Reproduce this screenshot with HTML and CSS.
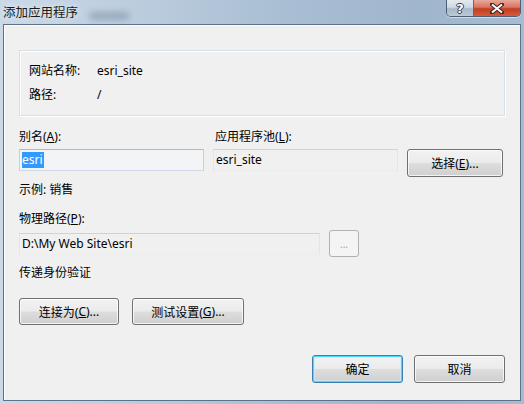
FILE: index.html
```html
<!DOCTYPE html>
<html lang="zh-CN">
<head>
<meta charset="utf-8">
<title>添加应用程序</title>
<link rel="stylesheet" href="styles.css">
</head>
<body>
<div class="window">
  <div class="titlebar">
    <span class="title">添加应用程序</span>
    <span class="ghost"></span>
    <div class="caption">
      <span class="cap-btn help">?</span>
      <span class="cap-btn close">
        <svg width="14" height="11" viewBox="0 0 14 11"><path d="M2 1.5 L12 9.5 M12 1.5 L2 9.5" stroke="#3a2a28" stroke-width="4" stroke-linecap="square" fill="none"/><path d="M2 1.5 L12 9.5 M12 1.5 L2 9.5" stroke="#fff" stroke-width="2" fill="none"/></svg>
      </span>
    </div>
  </div>
  <div class="client">
    <div class="groupbox">
      <span class="k">网站名称:</span><span class="v">esri_site</span>
      <span class="k">路径:</span><span class="v">/</span>
    </div>

    <div class="pool-grid">
      <label class="lbl">别名(<u>A</u>):</label>
      <label class="lbl">应用程序池(<u>L</u>):</label>
      <span></span>
      <div class="input edit"><span class="sel">esri</span></div>
      <div class="input readonly">esri_site</div>
      <button class="btn select">选择(<u>E</u>)...</button>
    </div>

    <div class="line example">示例: 销售</div>
    <div class="line lbl-path">物理路径(<u>P</u>):</div>

    <div class="path-row">
      <div class="input readonly path">D:\My Web Site\esri</div>
      <button class="btn dots" disabled>...</button>
    </div>

    <div class="line auth">传递身份验证</div>

    <div class="btn-row">
      <button class="btn connect">连接为(<u>C</u>)...</button>
      <button class="btn test">测试设置(<u>G</u>)...</button>
    </div>

    <div class="footer">
      <button class="btn default">确定</button>
      <button class="btn cancel">取消</button>
    </div>
  </div>
</div>
</body>
</html>
```

FILE: styles.css
```css
* { box-sizing: border-box; }

html, body {
  margin: 0;
  padding: 0;
  width: 524px;
  height: 404px;
  overflow: hidden;
}

body {
  font-family: "Noto Sans", "Noto Sans CJK SC", sans-serif;
  font-size: 12px;
  color: #000;
}

.window {
  width: 524px;
  height: 404px;
  display: flex;
  flex-direction: column;
  padding: 0 3px 3px 3px;
  background: linear-gradient(to right, #cbd9e7 0%, #bccdde 25%, #a9bed3 55%, #a0b6cd 80%, #a7bcd2 100%);
}

.titlebar {
  height: 24px;
  flex: none;
  display: flex;
  align-items: flex-start;
  position: relative;
}

.title {
  font-family: "Noto Sans CJK SC", sans-serif;
  font-size: 12.5px;
  line-height: 24px;
  color: #1a1a1a;
  text-shadow: 0 0 6px rgba(255,255,255,0.9);
}

.ghost {
  position: absolute;
  left: 86px;
  top: 12px;
  width: 40px;
  height: 8px;
  border-radius: 4px;
  background: rgba(80, 100, 125, 0.35);
  filter: blur(3px);
}

.caption {
  margin-left: auto;
  display: flex;
  height: 17px;
  border: 1px solid #4e5f72;
  border-top: none;
  border-radius: 0 0 5px 5px;
  overflow: hidden;
  box-shadow: 0 1px 0 rgba(255,255,255,0.5);
}

.cap-btn {
  display: flex;
  align-items: center;
  justify-content: center;
  height: 16px;
}

.help {
  width: 27px;
  border-right: 1px solid #5b6b7c;
  background: linear-gradient(to bottom, #e3e9f0 0%, #cfd9e3 45%, #a9b8c7 55%, #bdcad7 100%);
  color: #fff;
  font-family: "DejaVu Sans", sans-serif;
  font-weight: bold;
  font-size: 13px;
  text-shadow: 1px 0 0 #2c3a48, -1px 0 0 #2c3a48, 0 1px 0 #2c3a48, 0 -1px 0 #2c3a48;
}

.close {
  width: 46px;
  background: linear-gradient(to bottom, #e8a89c 0%, #d9745f 45%, #c33d22 55%, #d65a3a 100%);
}

.client {
  flex: 1;
  background: #f0f0f0;
  border: 1px solid #5d7189;
  padding: 0 15px;
  display: flex;
  flex-direction: column;
  box-shadow: inset 1px 1px 0 #fcfcfc;
}

.groupbox {
  margin-top: 25px;
  height: 66px;
  border: 1px solid #d5dfe5;
  box-shadow: inset 1px 1px 0 #fff, 1px 1px 0 #fff;
  display: grid;
  grid-template-columns: 68px 1fr;
  grid-auto-rows: 24px;
  align-items: center;
  padding: 7px 9px 0 9px;
}

.lbl, .line {
  line-height: 18px;
  height: 18px;
  display: block;
}

u { text-decoration: underline; text-underline-offset: 1px; }

.pool-grid {
  margin-top: 12px;
  display: grid;
  grid-template-columns: 185px 185px 96px;
  column-gap: 9px;
  grid-template-rows: 18px 28px;
  row-gap: 3px;
}
.pool-grid .lbl:nth-child(2) { padding-left: 2px; }

.input {
  height: 22px;
  line-height: 20px;
  padding: 0 2px;
  border: 1px solid;
  white-space: nowrap;
  overflow: hidden;
}

.input.edit {
  background: #f3f4f6;
  border-color: #a9bccf #c3d2e1 #ccd9e6 #c3d2e1;
}

.input.readonly {
  background: #f0f0f0;
  border-color: #d1d1d1 #e5e5e5 #ececec #e5e5e5;
}

.sel {
  background: #3399ff;
  color: #fff;
  display: inline-block;
  line-height: 16px;
  padding: 0 1px 0 0;
}

.btn {
  font: inherit;
  color: #000;
  height: 28px;
  padding: 0;
  border: 1px solid #707070;
  border-radius: 3px;
  background: linear-gradient(to bottom, #f2f2f2 0%, #ebebeb 48%, #dddddd 52%, #cfcfcf 100%);
  box-shadow: inset 0 0 0 1px rgba(255,255,255,0.75);
  display: flex;
  align-items: center;
  justify-content: center;
  white-space: nowrap;
}

.btn.select { width: 96px; }

.example { margin-top: 4px; }
.lbl-path { margin-top: 11px; }

.path-row {
  margin-top: 2px;
  display: flex;
  align-items: center;
  gap: 9px;
}

.path-row .path { width: 301px; }

.btn.dots {
  width: 30px;
  height: 27px;
  color: #a0a0a0;
  border-color: #adb2b5;
  background: #f4f4f4;
  box-shadow: none;
  font-size: 10px;
}

.auth { margin-top: 7px; }

.btn-row {
  margin-top: 16px;
  display: flex;
  gap: 13px;
}

.btn.connect { width: 100px; height: 27px; }
.btn.test { width: 112px; height: 27px; }

.footer {
  margin-top: 30px;
  display: flex;
  justify-content: flex-end;
  gap: 11px;
}

.footer .btn { width: 91px; }

.btn.default {
  border-color: #3c7fb1;
  box-shadow: inset 0 0 0 1px #48d8fb, inset 0 0 0 2px rgba(200,240,255,0.6);
}
```
